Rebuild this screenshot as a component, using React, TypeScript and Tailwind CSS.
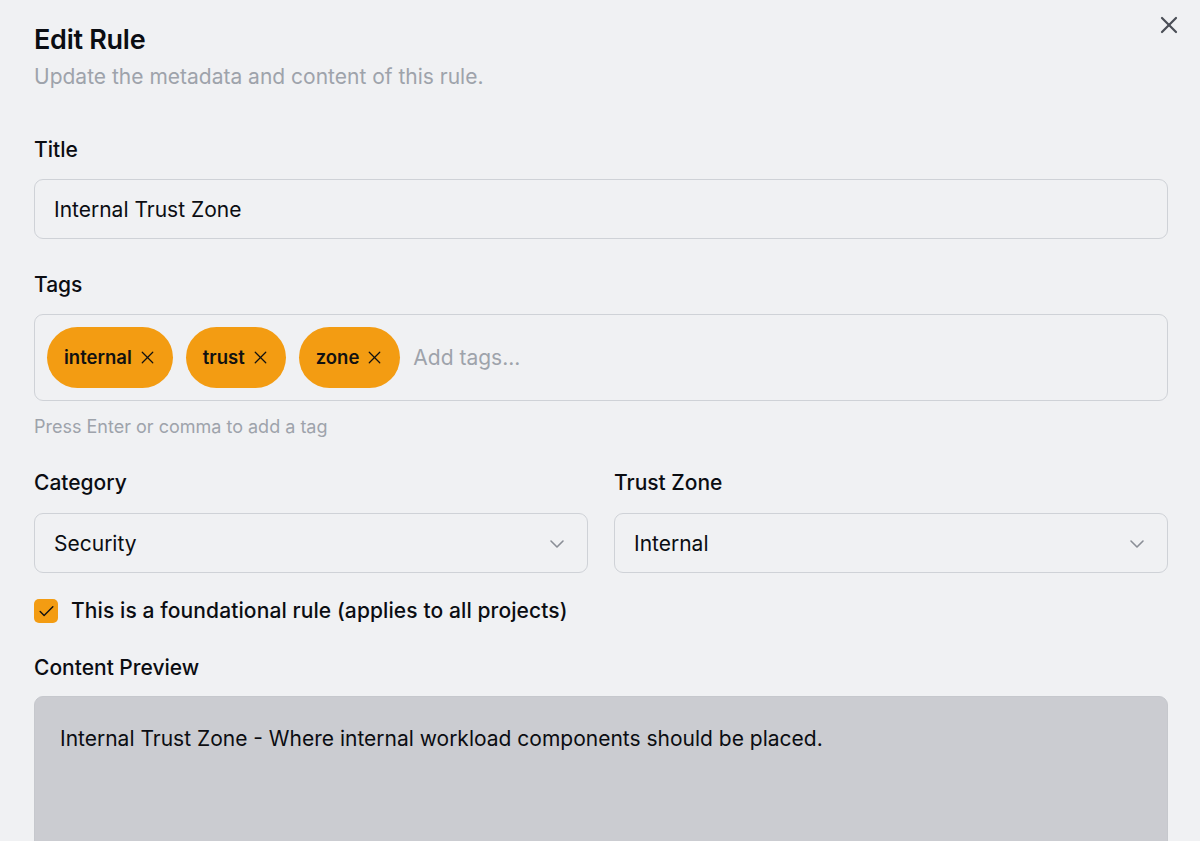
import { Check, ChevronDown, X } from "lucide-react";

export default function App() {
  const tags = ["internal", "trust", "zone"];

  return (
    <div className="min-h-[841px] h-[841px] overflow-hidden bg-[#f0f1f3] font-['Inter',sans-serif] text-[#0b0d12]">
      <div className="relative px-[34px] pr-[32px] pt-[22px]">
        <button className="absolute right-[17px] top-[11px] text-[#4b4f57]">
          <X size={28} strokeWidth={1.9} />
        </button>

        <div className="flex flex-col gap-[4px]">
          <h2 className="text-[27px] leading-[36px] font-semibold tracking-[-0.01em]">Edit Rule</h2>
          <p className="text-[21px] leading-[30px] text-[#9ea3ab]">Update the metadata and content of this rule.</p>
        </div>

        <div className="mt-[43px] flex flex-col gap-[14px]">
          <label className="text-[21px] leading-[30px] font-medium">Title</label>
          <div className="h-[60px] flex items-center rounded-[9px] border border-[#cfd2d7] bg-[#f0f1f3] px-[19px] pt-[1px] text-[21px]">
            Internal Trust Zone
          </div>
        </div>

        <div className="mt-[31px] flex flex-col gap-[14px]">
          <label className="text-[21px] leading-[30px] font-medium">Tags</label>
          <div className="h-[87px] flex items-center gap-[13px] rounded-[9px] border border-[#cfd2d7] px-[12px]">
            {tags.map((t) => (
              <span
                key={t}
                className="h-[61px] flex items-center gap-[5px] rounded-full bg-[#f39c12] pl-[17px] pr-[15px] text-[18.5px] font-semibold text-[#111]"
              >
                {t}
                <X size={21} strokeWidth={1.4} />
              </span>
            ))}
            <span className="text-[21px] text-[#9ea3ab]">Add tags...</span>
          </div>
          <p className="-mt-[2px] text-[18px] leading-[27px] text-[#9ea3ab]">Press Enter or comma to add a tag</p>
        </div>

        <div className="mt-[28px] grid grid-cols-2 gap-[26px]">
          <div className="flex flex-col gap-[15px]">
            <label className="text-[21px] leading-[30px] font-medium">Category</label>
            <div className="h-[60px] flex items-center justify-between rounded-[9px] border border-[#cfd2d7] pl-[19px] pr-[18px] pt-[1px] text-[21px]">
              Security
              <ChevronDown size={24} strokeWidth={1.6} className="text-[#8a8e96]" />
            </div>
          </div>
          <div className="flex flex-col gap-[15px]">
            <label className="text-[21px] leading-[30px] font-medium">Trust Zone</label>
            <div className="h-[60px] flex items-center justify-between rounded-[9px] border border-[#cfd2d7] pl-[19px] pr-[18px] pt-[1px] text-[21px]">
              Internal
              <ChevronDown size={24} strokeWidth={1.6} className="text-[#8a8e96]" />
            </div>
          </div>
        </div>

        <div className="mt-[23px] flex items-center gap-[13px]">
          <span className="h-[24px] w-[24px] flex items-center justify-center rounded-[5px] bg-[#f39c12] text-[#111]">
            <Check size={19} strokeWidth={1.8} />
          </span>
          <span className="text-[21px] leading-[30px] font-medium tracking-[0.005em]">This is a foundational rule (applies to all projects)</span>
        </div>

        <div className="mt-[27px] flex flex-col gap-[13px]">
          <label className="text-[21px] leading-[30px] font-medium">Content Preview</label>
          <div className="h-[200px] rounded-t-[9px] border border-[#c6c8cd] bg-[#cbccd1] px-[25px] pt-[27px] text-[21px] leading-[30px]">
            Internal Trust Zone - Where internal workload components should be placed.
          </div>
        </div>
      </div>
    </div>
  );
}
